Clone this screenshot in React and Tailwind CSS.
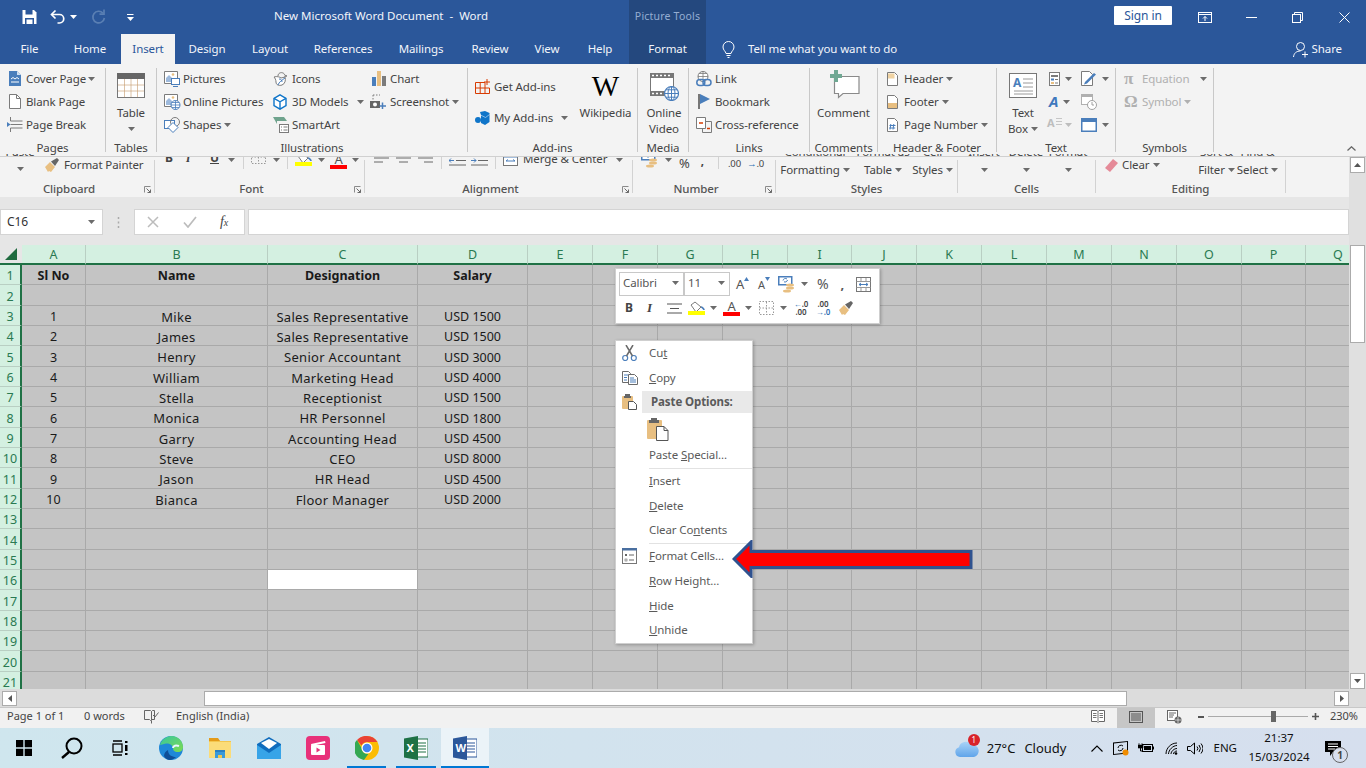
import React from "react";

const S = ({ w = 16, h = 16, children }) => (
  <svg width={w} height={h} viewBox={`0 0 ${w} ${h}`} fill="none" className="block shrink-0">{children}</svg>
);
const G = "#7b7b7b", B = "#4a7ebb", O = "#e8bf81", R = "#d83b01";

const Caret = ({ c = "#6b6b6b" }) => (
  <svg width="7" height="4" viewBox="0 0 7 4" className="block shrink-0"><path d="M0 0h7L3.5 4z" fill={c} /></svg>
);

/* ---------- Title bar icons ---------- */
const Save = () => <S w={15} h={16}><path d="M.5 1h11.5l2.5 2.5V15H.5z" fill="#fff" /><rect x="3.5" y="1" width="7" height="4.5" fill="#2b579a" /><rect x="3" y="9" width="9" height="6" fill="#2b579a" /><rect x="4.5" y="10.5" width="6" height="4.5" fill="#fff" /></S>;
const Undo = () => <S w={16} h={16}><path d="M5.5 1.5 1.5 5.5l4 4" stroke="#fff" strokeWidth="1.7" /><path d="M2 5.5h7.5a4 4 0 0 1 0 8.5H7.5" stroke="#fff" strokeWidth="1.7" /></S>;
const Redo = () => <S w={15} h={16}><path d="M12 4.2A5.8 5.8 0 1 0 13.4 9" stroke="#5a7fb3" strokeWidth="1.7" /><path d="M13 .5v4.6H8.5" stroke="#5a7fb3" strokeWidth="1.7" /></S>;
const Custom = () => <S w={7} h={7}><path d="M0 .5h6.5" stroke="#fff" /><path d="M0 3h7L3.5 7z" fill="#fff" /></S>;
const RibbonOpt = () => <S w={14} h={11}><rect x=".5" y=".5" width="13" height="10" stroke="#fff" /><path d="M.5 2.5h13" stroke="#fff" /><path d="M7 9V4.5M5 6.5l2-2 2 2" stroke="#fff" /></S>;
const Min = () => <S w={11} h={1}><path d="M0 .5h11" stroke="#fff" /></S>;
const Restore = () => <S w={11} h={11}><rect x=".5" y="2.5" width="8" height="8" stroke="#fff" /><path d="M2.5 2.5v-2h8v8h-2" stroke="#fff" /></S>;
const Close = () => <S w={11} h={11}><path d="M.5.5l10 10M10.5.5l-10 10" stroke="#fff" /></S>;
const Bulb = () => <S w={13} h={17}><path d="M4 12.5C3.6 10 1 9.3 1 6a5.5 5.5 0 0 1 11 0c0 3.3-2.600 4-3 6.500z" stroke="#fff" /><path d="M4.500 14.500h4M5.500 16.500h2" stroke="#fff" /></S>;
const Share = () => <S w={16} h={17}><circle cx="7.500" cy="5.500" r="4" stroke="#fff" /><path d="M.5 16c.5-4 3-6 7-6" stroke="#fff" /><path d="M12 10.500v6M9 13.500h6" stroke="#fff" /></S>;

/* ---------- Word ribbon icons ---------- */
const CoverPage = () => <S w={12} h={15}><path d="M0 0h8l4 4v11H0z" fill={B} /><path d="M8 0l4 4H8z" fill="#cfe0f2" /><path d="M2 8l2-1.500 2 1.500 2-1.500 2 1.500M2 11h8" stroke="#fff" /></S>;
const BlankPage = () => <S w={12} h={15}><path d="M.5.5h7l4 4v10H.5z" fill="#fff" stroke={G} /><path d="M7.500.5v4h4" stroke={G} /></S>;
const PageBreak = () => <S w={16} h={15}><path d="M3.500 0v4h12M3.500 15v-4h12M3.500 7.500h12" stroke={G} /><path d="M0 5l3.500 2.500L0 10z" fill={B} /></S>;
const TableIco = () => <S w={28} h={25}><rect x=".5" y=".5" width="27" height="24" fill="#fff" stroke="#777" /><rect x="0" y="0" width="28" height="6" fill="#666" /><path d="M1 12h26M1 18h26M7.500 6v18M14 6v18M20.500 6v18" stroke="#c49a6c" strokeOpacity=".6" /></S>;
const Pictures = () => <S w={16} h={16}><path d="M.5.5h13v9H8v3H.5z" fill="#fff" stroke={G} /><circle cx="9" cy="3.500" r="1.300" fill={O} /><path d="M2 11V7l3-3 3 3v4z" fill="#9db9dc" /><rect x="7.500" y="7.500" width="8" height="6" fill="#fff" stroke={B} /><path d="M9 15.500h5" stroke={B} /></S>;
const OnlinePic = () => <S w={17} h={16}><path d="M.5.5h13v8H8v4H.5z" fill="#fff" stroke={G} /><circle cx="9" cy="3.500" r="1.300" fill={O} /><path d="M2 11V7l3-3 3 3v4z" fill="#9db9dc" /><circle cx="11.500" cy="11" r="4.500" fill="#fff" stroke={B} /><path d="M7 11h9M11.500 6.500v9M8 8.500h7M8 13.500h7" stroke={B} strokeWidth=".8" /></S>;
const Shapes = () => <S w={17} h={16}><rect x=".5" y="3.500" width="10" height="8" fill="#fff" stroke={B} /><circle cx="11" cy="5" r="4.500" stroke={G} fill="none" /><path d="M9 5.500l5 5-5 5-5-5z" fill="#fff" stroke={B} /></S>;
const IconsIco = () => <S w={16} h={16}><path d="M5 5c0-3 3-4 5-3 1 .5 1.500 1 1.500 2L14 5l-2.500.5" stroke={G} /><path d="M1 6c3-1 6 0 7 1l4-1c1 3 0 7-3 8-3 1-6 0-6-3 0-2-1-4-2-5z" fill="#fff" stroke={G} /><path d="M5 14c1-3 4-5 7-7" stroke={B} /><path d="M6 8c2 0 3 1 3 3" stroke={B} /></S>;
const Models = () => <S w={14} h={16}><path d="M7 .8l6 3.500v7.400l-6 3.500-6-3.500V4.300z" stroke="#0f75c9" strokeWidth="1.400" fill="#fff" /><path d="M1 4.300l6 3.500 6-3.500M7 7.800v7.400" stroke="#0f75c9" strokeWidth="1.400" /></S>;
const SmartArt = () => <S w={16} h={16}><path d="M0 0h11l3 4H4v3z" fill="#6fa38d" /><rect x="6.500" y="7.500" width="9" height="8" fill="#fff" stroke={G} /><path d="M8 10h1M10.500 10h4M8 13h1M10.500 13h4" stroke={G} /></S>;
const Chart = () => <S w={14} h={15}><rect x="0" y="6" width="4" height="9" fill={B} /><rect x="5" y="0" width="4" height="15" fill={O} /><rect x="10" y="5" width="4" height="10" fill={G} /></S>;
const Shot = () => <S w={16} h={15}><path d="M3 1v8M3 1h7" stroke={G} strokeDasharray="1.500 1.500" /><rect x="0" y="7" width="10" height="7" fill="#666" /><circle cx="5" cy="10.500" r="2" fill="#fff" /><path d="M12.500 8.500v6.500M9.500 12h6.500" stroke={B} strokeWidth="1.500" /></S>;
const GetAdd = () => <S w={15} h={15}><path d="M.5 3.500h9.500v11H.5zM.5 9h14v5.500H5.200V3.500" stroke={R} /><path d="M12 0v6M9 3h6" stroke={R} /></S>;
const MyAdd = () => <S w={15} h={14}><path d="M5 1l5-1 4.500 2v9L10 14l-4-2V4z" fill="#0f75c9" /><circle cx="3" cy="9" r="3" fill="#0f75c9" /><path d="M5.500 4l5 2.500 4-3" stroke="#fff" strokeWidth=".5" /></S>;
const Film = () => <S w={29} h={28}><rect x=".5" y=".5" width="23" height="22" fill="#fff" stroke="#777" /><rect x="0" y="0" width="24" height="5" fill="#777" /><rect x="0" y="18" width="24" height="5" fill="#777" /><path d="M2 2.500h20M2 20.500h20" stroke="#fff" strokeWidth="1.600" strokeDasharray="2 2" /><circle cx="21.500" cy="20.500" r="7" fill="#fff" stroke={B} strokeWidth="1.200" /><path d="M14.500 20.500h14M21.500 13.500v14M16 16.800h11M16 24.200h11" stroke={B} /><ellipse cx="21.500" cy="20.500" rx="3.500" ry="7" stroke={B} /></S>;
const LinkIco = () => <S w={16} h={16}><circle cx="7" cy="5.500" r="5" fill="#fff" stroke={G} /><path d="M2 5.500h10M7 .5v8M3 2.500h8" stroke={G} strokeWidth=".8" /><rect x=".8" y="8.500" width="8" height="6" rx="3" stroke={B} strokeWidth="1.500" fill="none" /><rect x="7" y="8.500" width="8" height="6" rx="3" stroke={B} strokeWidth="1.500" fill="none" /></S>;
const Bookmark = () => <S w={12} h={15}><rect x="0" y="0" width="2" height="15" fill="#777" /><path d="M2 0l10 5-10 5z" fill={B} /></S>;
const CrossRef = () => <S w={16} h={16}><path d="M.5.5h9v11h-9z" fill="#fff" stroke={G} /><path d="M9.500 4.500h6v11h-9v-4" stroke={G} /><path d="M3 6h4" stroke={R} strokeWidth="1.500" /><path d="M11 11.500h3" stroke={R} strokeWidth="1.500" /></S>;
const CommentIco = () => <S w={31} h={29}><path d="M5.500 6.500h24.500v17H14l-4.500 4v-4h-4z" fill="#fff" stroke="#8a8a8a" strokeWidth="1.200" /><path d="M7 0v12M1 6h12" stroke="#70a893" strokeWidth="4" /></S>;
const Header = () => <S w={11} h={14}><path d="M.5.500h7l3 3v10H.5z" fill="#fff" stroke={G} /><rect x="1" y="1.500" width="6.500" height="5" fill="#f0d3a3" /></S>;
const Footer = () => <S w={11} h={14}><path d="M.5.500h7l3 3v10H.5z" fill="#fff" stroke={G} /><rect x="1" y="8" width="9" height="5" fill={O} /></S>;
const PageNum = () => <S w={11} h={14}><path d="M.5.500h7l3 3v10H.5z" fill="#fff" stroke={G} /><path d="M3.800 6l-.8 5.500M6.800 6L6 11.500M2.500 7.500h6M2.200 10h6" stroke={B} /></S>;
const TextBoxIco = () => (
  <S w={28} h={25}><rect x=".5" y=".5" width="27" height="24" fill="#fff" stroke="#777" /><path d="M14 6h10M14 10h10M14 14h10M5 18h19M5 21h19" stroke="#9a9a9a" /><text x="4" y="14" fontSize="12" fontWeight="700" fontFamily="Noto Sans, sans-serif" fill={B}>A</text></S>
);
const Quick = () => <S w={11} h={14}><rect x=".5" y=".5" width="10" height="13" fill="#fff" stroke={G} /><rect x="2" y="3" width="7" height="2" fill={G} /><rect x="2" y="6.500" width="3" height="2" fill={B} /><rect x="2" y="10" width="3" height="2" fill={O} /><path d="M6 7.500h3M6 11h3" stroke={G} /></S>;
const SigLine = () => <S w={16} h={15}><path d="M.5.500h8l3 3v11H.5z" fill="#fff" stroke={G} /><path d="M4 11l9-9 2 1.500-9 9-3 1z" fill={B} /></S>;
const WordArt = () => <span className="font-['Noto_Sans',sans-serif] text-[15px] leading-none font-bold italic text-[#3f78bd]">A</span>;
const DateIco = () => <S w={16} h={16}><rect x=".5" y=".5" width="11" height="10" fill="#fff" stroke="#b0b0b0" /><rect x="0" y="0" width="12" height="3" fill="#b0b0b0" /><circle cx="11" cy="11" r="4.500" fill="#fff" stroke="#a0a0a0" /><path d="M11 8v3h2" stroke="#a0a0a0" /></S>;
const DropCap = () => <div className="flex items-start"><span className="font-['Noto_Sans',sans-serif] text-[11px] leading-[11px] font-bold text-[#bdbdbd]">A</span><S w={7} h={15}><path d="M1 1.500h6M1 4.500h6M1 7.500h6" stroke="#c6c6c6" /></S></div>;
const ObjIco = () => <S w={16} h={14}><rect x=".75" y=".75" width="14.500" height="12.500" fill="#fff" stroke={B} strokeWidth="1.500" /><rect x="1" y="1" width="14" height="3" fill={B} /></S>;

/* ---------- Excel ribbon / toolbar icons ---------- */
const Brush = () => <S w={16} h={14}><path d="M0 9l5-5 5 5-4 5-2-1-1 1z" fill={O} /><path d="M6 3.500l6-3.500 2 2-4 6z" fill="#666" /></S>;
const Fill = () => <S w={17} h={14}><path d="M3 4l4-3 6 5-5 5z" fill="#fff" stroke={G} /><path d="M13 6c1 0 3 2 3 3" stroke={B} strokeWidth="1.600" /><rect x="0" y="10" width="17" height="4" fill="#ffff00" /></S>;
const ACol = () => <div className="flex flex-col items-center w-[17px]"><span className="font-['Noto_Sans',sans-serif] text-[13px] leading-[11px] text-[#555]">A</span><div className="w-[17px] h-[4px] bg-[#ff0000]" /></div>;
const Borders = () => <S w={15} h={14}><rect x=".5" y=".5" width="14" height="13" stroke="#999" strokeDasharray="1.500 1.500" /><path d="M.5 7h14M7.500 1v12" stroke="#999" strokeDasharray="1.500 1.500" /></S>;
const AlignC = () => <S w={15} h={11}><path d="M0 1h15M3 5.500h9M0 10h15" stroke="#555" /></S>;
const Coins = () => <S w={18} h={17}><rect x=".75" y=".75" width="13" height="8" fill="#fff" stroke={B} strokeWidth="1.500" /><path d="M5 4.500a2.500 2.500 0 0 1 4-1.500M9.500 4a2.500 2.500 0 0 1-3.500 1.800" stroke={B} /><ellipse cx="12" cy="9" rx="4" ry="1.500" fill={O} /><ellipse cx="12" cy="12" rx="4" ry="1.500" fill={O} /><ellipse cx="9" cy="15" rx="4" ry="1.500" fill={O} /></S>;
const Wrap = () => <S w={15} h={15}><rect x=".5" y=".5" width="14" height="14" stroke="#777" fill="#fff" /><path d="M.5 4.500h14M.5 10.500h14M5 1v3M10 1v3M5 11v3M10 11v3" stroke="#999" /><path d="M3 7.500h9M3 7.500l2-1.500M3 7.500l2 1.500M12 7.500l-2-1.500M12 7.500l-2 1.500" stroke={B} /></S>;
const Dec = ({ inc }) => (
  <div className="w-[16px] flex flex-col items-center font-['Noto_Sans',sans-serif] text-[8px] leading-[8px] font-semibold text-[#444]">
    {inc ? <><span>.00</span><span className="text-[#2f6fb4]">→.0</span></> : <><span><span className="text-[#2f6fb4]">←</span>.0</span><span>.00</span></>}
  </div>
);
const Eraser = () => <S w={13} h={13}><path d="M8 0l5 4-8 9-5-4z" fill="#e58a98" /></S>;
const Launcher = () => <S w={7} h={7}><path d="M.5 6.500v-6h6" stroke="#8a8a8a" /><path d="M2.500 2.500l4 4M6.500 3.500v3h-3" stroke="#6a6a6a" /></S>;
const MergeIco = () => <S w={15} h={13}><rect x=".5" y=".5" width="14" height="12" fill="#fff" stroke="#777" /><path d="M.5 4h14M3 8h9M3 8l2-1.500M12 8l-2-1.500" stroke={B} /></S>;
const IndentIco = ({ r }) => <S w={17} h={11}><path d="M0 1h17M7 5.500h10M0 10h17" stroke="#666" /><path d={r ? "M0 5.500h5M3 3.500l2 2-2 2" : "M5 5.500H0M2 3.500l-2 2 2 2"} stroke={B} /></S>;

/* Menu icons */
const Scissors = () => <S w={15} h={16}><circle cx="3.200" cy="13" r="2.500" stroke={B} strokeWidth="1.200" /><circle cx="11.800" cy="13" r="2.500" stroke={B} strokeWidth="1.200" /><path d="M4.500 11L11 0M10.500 11L4 0" stroke="#6a6a6a" strokeWidth="1.500" /></S>;
const CopyIco = () => <S w={16} h={14}><path d="M.5.500h6l2 2v9h-8z" fill="#fff" stroke="#6a6a6a" /><path d="M6.500 3.500h6l3 3v7h-9z" fill="#fff" stroke="#6a6a6a" /><path d="M2 4h4M2 6.500h3M2 9h3M8 7h4M8 9h6M8 11h6" stroke={B} /></S>;
const PasteIco = ({ big }) => big ? (
  <S w={22} h={24}><rect x="0" y="3" width="15" height="19" rx="1" fill={O} /><path d="M4 3V1h6v2h2v3H2V3z" fill="#666" /><path d="M9.500 9.500H17l4 4v10H9.500z" fill="#fff" stroke="#555" /><path d="M17 9.500v4h4" stroke="#555" /></S>
) : (
  <S w={15} h={16}><rect x="0" y="2" width="11" height="13" rx="1" fill={O} /><path d="M3 2V0h5v2h1v2H2V2z" fill="#666" /><path d="M6.500 7.500h5l3 3v5h-8z" fill="#fff" stroke="#555" /></S>
);
const FormatCellsIco = () => <S w={15} h={16}><rect x=".5" y=".5" width="14" height="15" fill="#fff" stroke="#777" /><rect x="0" y="0" width="15" height="2.500" fill="#4a6fa0" /><rect x="3" y="6" width="2" height="2" fill="#666" /><rect x="3" y="11" width="2" height="2" stroke="#666" strokeWidth=".6" /><path d="M7 7h5M7 12h5" stroke="#666" /></S>;

/* Status bar */
const Proof = () => <S w={15} h={15}><path d="M.5 1.500h6l1 1 1-1h2v9h-3l-1 1-1-1h-5zM7.500 2.500v9" stroke="#666" /><path d="M9 6l2 2 3.500-4.500" stroke="#666" /><path d="M7.500 11.500v3" stroke="#666" /></S>;
const ReadIco = () => <S w={14} h={13}><path d="M.5.500h5.500l1 1 1-1h5.500v11H8l-1 1-1-1H.5z" fill="#fff" stroke="#666" /><path d="M7 1.500v10M2 3.500h3.500M2 5.500h3.500M2 7.500h3.500M8.500 3.500H12M8.500 5.500H12M8.500 7.500H12" stroke="#777" /></S>;
const PrintIco = () => <S w={14} h={12}><rect x=".5" y=".5" width="13" height="11" fill="none" stroke="#555" /><path d="M2 3h10M2 5h10M2 7h10M2 9h10" stroke="#555" /></S>;
const WebIco = () => <S w={15} h={14}><rect x=".5" y=".5" width="10" height="10" fill="#fff" stroke="#666" /><path d="M2 3h7M2 5h5M2 7h4" stroke="#666" /><circle cx="11" cy="10" r="3.500" fill="#666" /><path d="M8 10h6M11 7v6" stroke="#fff" strokeWidth=".6" /></S>;

/* Taskbar */
const WinLogo = () => <S w={16} h={16}><path d="M0 0h7.300v7.300H0zM8.700 0H16v7.300H8.700zM0 8.700h7.300V16H0zM8.700 8.700H16V16H8.700z" fill="#000" /></S>;
const Search = () => <S w={22} h={22}><circle cx="13" cy="9" r="7.500" stroke="#000" strokeWidth="2" /><path d="M8 15l-7 6" stroke="#000" strokeWidth="2.400" /></S>;
const TaskView = () => <S w={16} h={16}><path d="M1 1h9M1 15h9" stroke="#000" strokeWidth="1.400" /><rect x="1" y="4" width="9" height="8" stroke="#000" strokeWidth="1.300" /><rect x="13" y="1" width="2.500" height="2" fill="#000" /><rect x="13" y="5" width="2.500" height="6" fill="#000" /><rect x="13" y="13" width="2.500" height="2" fill="#000" /></S>;
const Edge = () => (
  <S w={24} h={24}><defs><linearGradient id="ed1" x1="0" y1="0" x2="1" y2="1"><stop offset="0" stopColor="#38c6a0" /><stop offset="1" stopColor="#7ddc4f" /></linearGradient></defs>
    <circle cx="12" cy="12" r="12" fill="#1f88d8" /><path d="M1 9C3 2 9 0 13 0c6 0 11 5 11 11 0 3-2 5-5 5-4 0-5-2-5-4 0-3-4-5-7-4.500C4 8 2 9 1 9z" fill="url(#ed1)" /><path d="M9 14c0 5 4 7 8 7-2 2-4 3-6 3-3 0-5-2-6-4 0-3 2-5 4-6z" fill="#0f4f98" /><path d="M14 12c0-2.500 3-3 6-2" stroke="#eaf6ff" strokeWidth="2" /></S>
);
const Folder = () => <S w={22} h={20}><path d="M0 1h9l2 2h11v17H0z" fill="#f3c64e" /><path d="M0 0h9l2 3H0z" fill="#e49b19" /><path d="M0 4h22v16H0z" fill="#fbdc79" /><path d="M6 14h10v6H6z" fill="#3b9ad9" /><path d="M9 17h4v3H9z" fill="#f3c64e" /><path d="M6 12h10v2H6z" fill="#2a7fc0" /></S>;
const Mail = () => <S w={24} h={22}><path d="M12 0L0 7v15h24V7z" fill="#0f6cbd" /><path d="M0 8l12 8 12-8v14H0z" fill="#37a4e8" /><path d="M4 6l8-4 8 4-8 6z" fill="#fff" /></S>;
const Clip = () => <S w={24} h={24}><rect width="24" height="24" rx="4" fill="#e8317a" /><rect x="5" y="9" width="14" height="10" rx="1" fill="#fff" /><path d="M5 8l14-3 .5 2-14 3z" fill="#fff" /><path d="M10.500 11.500v5l4-2.500z" fill="#e8317a" /></S>;
const Chrome = () => <S w={24} h={24}><circle cx="12" cy="12" r="12" fill="#fbbc04" /><path d="M12 0a12 12 0 0 1 10.400 6H12a6 6 0 0 0-5.500 3.500L2 4A12 12 0 0 1 12 0z" fill="#ea4335" /><path d="M2 4l4.500 8a6 6 0 0 0 7 5.800L9 24A12 12 0 0 1 2 4z" fill="#34a853" /><circle cx="12" cy="12" r="5.500" fill="#fff" /><circle cx="12" cy="12" r="4.300" fill="#4285f4" /></S>;
const AppTile = ({ c, l, line }) => (
  <S w={24} h={24}><rect x="8" y="3" width="16" height="18" fill="#fff" stroke={c} /><path d="M14 7h8M14 10h8M14 13h8M14 16h8" stroke={line} strokeWidth="1.200" /><path d="M0 2.500l14-2.500v24L0 21.500z" fill={c} /><text x="2.500" y="16" fontSize="11" fontWeight="700" fontFamily="Noto Sans, sans-serif" fill="#fff">{l}</text></S>
);
const Cloud = () => <S w={24} h={17}><defs><linearGradient id="cl" x1="0" y1="0" x2="0" y2="1"><stop offset="0" stopColor="#a9d3f7" /><stop offset="1" stopColor="#5fa4ea" /></linearGradient></defs><path d="M5 17a5 5 0 0 1-1-9.800A6.500 6.500 0 0 1 16 5a5.500 5.500 0 0 1 3 12z" fill="url(#cl)" /></S>;
const Chevron = () => <S w={12} h={7}><path d="M.5 6.500L6 1l5.500 5.500" stroke="#000" strokeWidth="1.100" /></S>;
const Meet = () => <S w={17} h={16}><rect x=".5" y="1.500" width="14" height="11.500" stroke="#000" transform="skewY(-6) translate(0 1.500)" /><path d="M5 8a3 3 0 0 1 5-2M10 8a3 3 0 0 1-5 2" stroke="#000" /><circle cx="12.500" cy="12.500" r="3" fill="#f08c00" /></S>;
const Battery = () => <S w={16} h={12}><path d="M1 1v2M4 1v2M0 3h5v3H0z" fill="#000" stroke="#000" strokeWidth=".6" /><path d="M2.500 6v3h2" stroke="#000" /><rect x="4.500" y="2.500" width="10" height="7" stroke="#000" /><rect x="6" y="4" width="7" height="4" fill="#000" /><rect x="15" y="4.500" width="1" height="3" fill="#000" /></S>;
const Wifi = () => <S w={13} h={13}><path d="M1 12C1 6 6 1 12 1M3.500 12C3.500 8 8 3.500 12 3.500M6 12c0-2.500 3-5.500 6-5.500" stroke="#000" strokeWidth="1" /><path d="M8.500 12c0-1.500 1.500-3 3.500-3" stroke="#000" strokeWidth="1" /><circle cx="11" cy="11.500" r="1.300" fill="#000" /></S>;
const Speaker = () => <S w={16} h={13}><path d="M.5 4.500h3L7.500 1v11l-4-3.500h-3z" stroke="#000" /><path d="M10 4.500a3 3 0 0 1 0 4M12 3a5.500 5.500 0 0 1 0 7M14 1.500a8 8 0 0 1 0 10" stroke="#000" /></S>;
const Notify = () => <S w={16} h={15}><path d="M0 0h16v11H8l-3 4v-4H0z" fill="#000" /><path d="M3 3h10M3 5.500h10M3 8h7" stroke="#fff" /></S>;

/* ---------- Layout helpers ---------- */
const Sep = () => <div className="w-px h-[84px] mt-1 shrink-0 bg-[#c8c8c8]" />;
const Group = ({ w, label, children, inner = "" }) => (
  <div className={`${w} shrink-0 flex flex-col`}>
    <div className={`h-[76px] pt-[3px] ${inner}`}>{children}</div>
    <div className="h-[15px] leading-[15px] text-center whitespace-nowrap">{label}</div>
  </div>
);
const Item = ({ icon, boxW = "w-[18px]", label, caret, gapC = "ml-[3px]", c = "" }) => (
  <div className={`flex items-center h-[23px] whitespace-nowrap ${c}`}>
    <div className={`${boxW} shrink-0 flex items-center`}>{icon}</div>
    <span>{label}</span>
    {caret && <div className={gapC}><Caret /></div>}
  </div>
);

const XSep = () => <div className="w-px h-[33px] mt-[6px] shrink-0 bg-[#d2d2d2]" />;
const XGroup = ({ w, label, launcher, children }) => (
  <div className={`${w} shrink-0 flex flex-col`}>
    <div className="h-[28px] overflow-hidden relative">{children}</div>
    <div className="h-[14px] flex items-center whitespace-nowrap">
      <span className={`flex-1 text-center font-medium text-[#555] ${launcher ? "pr-[6px]" : ""}`}>{label}</span>
      {launcher && <div className="mr-[3px]"><Launcher /></div>}
    </div>
  </div>
);
const StackCol = ({ w, top, bottom, caret }) => (
  <div className={`${w} shrink-0 flex flex-col items-center -mt-[9px] whitespace-nowrap`}>
    <div className="h-[14px] leading-[14px]">{top}</div>
    <div className="h-[14px] leading-[14px] mt-[4px] flex items-center gap-[3px]">{bottom}{caret && <Caret />}</div>
  </div>
);

const columns = ["A", "B", "C", "D", "E", "F", "G", "H", "I", "J", "K", "L", "M", "N", "O", "P", "Q"];
const data = [
  ["Sl No", "Name", "Designation", "Salary"],
  [],
  ["1", "Mike", "Sales Representative", "USD 1500"],
  ["2", "James", "Sales Representative", "USD 1500"],
  ["3", "Henry", "Senior Accountant", "USD 3000"],
  ["4", "William", "Marketing Head", "USD 4000"],
  ["5", "Stella", "Receptionist", "USD 1500"],
  ["6", "Monica", "HR Personnel", "USD 1800"],
  ["7", "Garry", "Accounting Head", "USD 4500"],
  ["8", "Steve", "CEO", "USD 8000"],
  ["9", "Jason", "HR Head", "USD 4500"],
  ["10", "Bianca", "Floor Manager", "USD 2000"],
];
const tabs = [
  ["File", "w-[59px]"], ["Home", "w-[62px]"], ["Insert", "w-[54px] bg-[#f3f3f3] text-[#2b579a]"], ["Design", "w-[64px]"],
  ["Layout", "w-[62px]"], ["References", "w-[84px]"], ["Mailings", "w-[72px]"], ["Review", "w-[66px]"], ["View", "w-[48px]"], ["Help", "w-[58px]"],
];

function MenuItem({ icon, h = "h-[24px]", children }) {
  return (
    <div className={`${h} flex items-center`}>
      <div className="w-[33px] pl-[6px] shrink-0">{icon}</div>
      <span className="whitespace-nowrap text-[#5a5a5a]">{children}</span>
    </div>
  );
}

export default function App() {
  return (
    <div className="relative w-[1366px] h-[768px] overflow-hidden flex flex-col bg-[#f3f3f3] text-[#444] text-[11.5px] tracking-[-0.1px] font-['Noto_Sans',sans-serif]">
      {/* Title row */}
      <div className="h-[34px] shrink-0 bg-[#2b579a] flex text-white">
        <div className="w-[274px] flex items-center pl-[22px]">
          <Save />
          <div className="ml-[13px]"><Undo /></div>
          <div className="ml-[4px]"><Caret c="#fff" /></div>
          <div className="ml-[14px]"><Redo /></div>
          <div className="ml-[21px]"><Custom /></div>
        </div>
        <div className="w-[355px] flex items-center pb-[2px] text-[11.5px] tracking-normal text-[#f2f5fa] whitespace-pre">New Microsoft Word Document  -  Word</div>
        <div className="w-[77px] bg-[#24487e] flex items-center justify-center text-[#95aed2] text-[10.5px] tracking-[0.2px] whitespace-nowrap">Picture Tools</div>
        <div className="w-[408px] shrink-0" />
        <div className="w-[58px] h-[19px] mt-[6px] bg-white text-[#2b579a] text-[12px] rounded-[1px] flex items-center justify-center">Sign in</div>
        <div className="ml-[26px] flex items-center"><RibbonOpt /></div>
        <div className="ml-[34px] flex items-center"><Min /></div>
        <div className="ml-[35px] flex items-center"><Restore /></div>
        <div className="ml-[36px] flex items-center"><Close /></div>
      </div>
      {/* Tabs row */}
      <div className="h-[30px] shrink-0 bg-[#2b579a] flex text-[#f2f5fa] text-[11.5px]">
        {tabs.map(([t, c]) => (
          <div key={t} className={`${c} flex items-center justify-center shrink-0`}>{t}</div>
        ))}
        <div className="w-[77px] shrink-0 bg-[#24487e] flex items-center justify-center">Format</div>
        <div className="ml-[16px] flex items-center"><Bulb /></div>
        <div className="ml-[13px] flex items-center whitespace-nowrap">Tell me what you want to do</div>
        <div className="flex-1" />
        <div className="flex items-center gap-[3px] pr-[24px]"><Share /><span>Share</span></div>
      </div>

      {/* Word ribbon */}
      <div className="h-[93px] shrink-0 flex border-b border-[#d0d0d0]">
        <Group w="w-[105px]" label="Pages" inner="pl-[9px]">
          <Item icon={<CoverPage />} boxW="w-[17px]" label="Cover Page" caret gapC="ml-[2px]" />
          <Item icon={<BlankPage />} boxW="w-[17px]" label="Blank Page" />
          <div className="-ml-[2px]"><Item icon={<PageBreak />} boxW="w-[19px]" label="Page Break" /></div>
        </Group>
        <Sep />
        <Group w="w-[50px]" label="Tables">
          <div className="flex flex-col items-center pt-[6px]">
            <TableIco />
            <span className="mt-[7px] leading-[16px]">Table</span>
            <div className="mt-[6px]"><Caret /></div>
          </div>
        </Group>
        <Sep />
        <Group w="w-[310px]" label="Illustrations" inner="flex pl-[7px]">
          <div className="w-[109px] shrink-0">
            <Item icon={<Pictures />} boxW="w-[19px]" label="Pictures" />
            <Item icon={<OnlinePic />} boxW="w-[19px]" label="Online Pictures" />
            <Item icon={<Shapes />} boxW="w-[19px]" label="Shapes" caret />
          </div>
          <div className="w-[99px] shrink-0">
            <Item icon={<IconsIco />} boxW="w-[19px]" label="Icons" />
            <Item icon={<Models />} boxW="w-[19px]" label="3D Models" caret gapC="ml-[8px]" />
            <Item icon={<SmartArt />} boxW="w-[19px]" label="SmartArt" />
          </div>
          <div className="flex-1">
            <Item icon={<Chart />} boxW="w-[18px]" label="Chart" />
            <div className="-ml-[2px]"><Item icon={<Shot />} boxW="w-[20px]" label="Screenshot" caret /></div>
          </div>
        </Group>
        <Sep />
        <Group w="w-[169px]" label="Add-ins" inner="flex pl-[7px]">
          <div className="w-[99px] shrink-0 pt-[8px]">
            <Item icon={<GetAdd />} boxW="w-[19px]" label="Get Add-ins" />
            <div className="mt-[8px]"><Item icon={<MyAdd />} boxW="w-[19px]" label="My Add-ins" caret gapC="ml-[8px]" /></div>
          </div>
          <div className="flex-1 flex flex-col items-center pt-[4px]">
            <span className="font-['Liberation_Serif',serif] text-[29px] leading-[30px] text-black">W</span>
            <span className="mt-[4px] leading-[16px]">Wikipedia</span>
          </div>
        </Group>
        <Sep />
        <Group w="w-[50px]" label="Media">
          <div className="flex flex-col items-center pt-[6px] pl-[2px]">
            <Film />
            <span className="mt-[4px] leading-[16px] text-center">Online<br />Video</span>
          </div>
        </Group>
        <Sep />
        <Group w="w-[120px]" label="Links" inner="pl-[7px]">
          <Item icon={<LinkIco />} boxW="w-[19px]" label="Link" />
          <div className="pl-[2px]"><Item icon={<Bookmark />} boxW="w-[17px]" label="Bookmark" /></div>
          <Item icon={<CrossRef />} boxW="w-[19px]" label="Cross-reference" />
        </Group>
        <Sep />
        <Group w="w-[67px]" label="Comments">
          <div className="flex flex-col items-center">
            <div className="pt-[3px] pl-[1px]"><CommentIco /></div>
            <span className="mt-[6px] leading-[16px]">Comment</span>
          </div>
        </Group>
        <Sep />
        <Group w="w-[118px]" label="Header & Footer" inner="pl-[9px]">
          <Item icon={<Header />} boxW="w-[17px]" label="Header" caret />
          <Item icon={<Footer />} boxW="w-[17px]" label="Footer" caret />
          <Item icon={<PageNum />} boxW="w-[17px]" label="Page Number" caret />
        </Group>
        <Sep />
        <Group w="w-[118px]" label="Text" inner="flex">
          <div className="w-[52px] shrink-0 flex flex-col items-center pt-[6px]">
            <TextBoxIco />
            <span className="mt-[7px] leading-[16px]">Text</span>
            <div className="flex items-center gap-[3px] leading-[16px]"><span>Box</span><Caret /></div>
          </div>
          <div className="w-[32px] shrink-0">
            <div className="h-[23px] flex items-center gap-[5px]"><Quick /><Caret /></div>
            <div className="h-[23px] flex items-center gap-[5px]"><WordArt /><Caret /></div>
            <div className="h-[23px] flex items-center gap-[3px] -ml-[2px]"><DropCap /><Caret c="#bdbdbd" /></div>
          </div>
          <div>
            <div className="h-[23px] flex items-center gap-[5px]"><SigLine /><Caret /></div>
            <div className="h-[23px] flex items-center"><DateIco /></div>
            <div className="h-[23px] flex items-center gap-[5px]"><ObjIco /><Caret /></div>
          </div>
        </Group>
        <Sep />
        <Group w="w-[97px]" label="Symbols" inner="pl-[8px] text-[#b0b0b0]">
          <div className="flex items-center h-[23px] whitespace-nowrap">
            <span className="w-[18px] font-['Liberation_Serif',serif] text-[17px] font-bold">π</span>
            <span>Equation</span>
            <div className="ml-[11px]"><Caret /></div>
          </div>
          <div className="flex items-center h-[23px] whitespace-nowrap">
            <span className="w-[18px] font-['Liberation_Serif',serif] text-[17px] font-bold">Ω</span>
            <span>Symbol</span>
            <div className="ml-[3px]"><Caret c="#b0b0b0" /></div>
          </div>
        </Group>
        <Sep />
        <div className="flex-1 flex items-end justify-end pr-[10px] pb-[5px]">
          <S w={9} h={5}><path d="M.5 4.500L4.500.8l4 3.700" stroke="#666" strokeWidth="1.300" /></S>
        </div>
      </div>

      {/* Everything below the Word ribbon */}
      <div className="h-[532px] shrink-0 flex">
        <div className="w-[1349px] shrink-0 -mt-[3px] relative z-10 flex flex-col overflow-hidden">
          {/* Excel ribbon behind */}
          <div className="h-[43px] shrink-0 flex">
            <XGroup w="w-[154px]" label="Clipboard" launcher>
              <div className="flex">
                <div className="w-[40px] flex flex-col items-center -mt-[9px]">
                  <span className="h-[14px] leading-[14px]">Paste</span>
                  <div className="mt-[8px]"><Caret /></div>
                </div>
                <div className="flex items-center h-[14px] mt-[4px] ml-[5px] gap-[3px] whitespace-nowrap"><Brush /><span>Format Painter</span></div>
              </div>
            </XGroup>
            <XSep />
            <XGroup w="w-[209px]" label="Font" launcher>
              <div className="mt-[3px] h-[25px] overflow-hidden flex items-start pl-[10px] text-[#444]">
                <div className="flex items-center h-[14px] -mt-[6px] font-bold text-[12px]">
                  <span className="w-[21px]">B</span><span className="w-[24px] italic font-serif">I</span><span className="w-[15px] underline">U</span>
                </div>
                <div className="mt-[1px] ml-[3px]"><Caret /></div>
                <div className="w-px h-[12px] bg-[#d2d2d2] ml-[8px]" />
                <div className="ml-[7px] -mt-[7px]"><Borders /></div>
                <div className="mt-[1px] ml-[7px]"><Caret /></div>
                <div className="w-px h-[12px] bg-[#d2d2d2] ml-[7px]" />
                <div className="ml-[7px] -mt-[5px]"><Fill /></div>
                <div className="mt-[1px] ml-[6px]"><Caret /></div>
                <div className="ml-[5px] -mt-[3px]"><ACol /></div>
                <div className="mt-[1px] ml-[5px]"><Caret /></div>
              </div>
            </XGroup>
            <XSep />
            <XGroup w="w-[267px]" label="Alignment" launcher>
              <div className="mt-[3px] h-[25px] overflow-hidden flex items-start pl-[9px]">
                <div className="flex gap-[7px]"><S w={15} h={6}><path d="M0 1h15M0 5h9" stroke="#666" /></S><S w={15} h={6}><path d="M0 1h15M3 5h9" stroke="#666" /></S><S w={15} h={6}><path d="M0 1h15M6 5h9" stroke="#666" /></S></div>
                <div className="w-px h-[12px] bg-[#d2d2d2] ml-[8px]" />
                <div className="ml-[7px] flex gap-[5px] -mt-[2px]"><IndentIco /><IndentIco r /></div>
                <div className="w-px h-[12px] bg-[#d2d2d2] ml-[7px]" />
                <div className="ml-[7px] -mt-[4px]"><MergeIco /></div>
                <span className="ml-[5px] h-[14px] -mt-[5px] leading-[14px] whitespace-nowrap">Merge &amp; Center</span>
                <div className="ml-[9px] mt-[1px]"><Caret /></div>
              </div>
            </XGroup>
            <XSep />
            <XGroup w="w-[142px]" label="Number" launcher>
              <div className="mt-[3px] h-[25px] overflow-hidden flex items-start pl-[8px]">
                <div className="-mt-[6px]"><Coins /></div>
                <div className="ml-[6px] mt-[1px]"><Caret /></div>
                <span className="ml-[7px] -mt-[1px] text-[13px] leading-[14px]">%</span>
                <span className="ml-[11px] -mt-[3px] font-bold leading-[14px]">,</span>
                <div className="w-px h-[12px] bg-[#d2d2d2] ml-[14px]" />
                <div className="ml-[9px] flex gap-[6px] text-[9.5px] leading-[12px] pt-[1px] whitespace-nowrap"><span>.00</span><span><span className="text-[#2f6fb4]">→</span>.0</span></div>
              </div>
            </XGroup>
            <XSep />
            <XGroup w="w-[181px]" label="Styles">
              <div className="flex pl-[1px] pt-0">
                <StackCol w="w-[76px]" top="Conditional" bottom="Formatting" caret />
                <StackCol w="w-[60px]" top="Format as" bottom="Table" caret />
                <StackCol w="w-[39px]" top="Cell" bottom="Styles" caret />
              </div>
            </XGroup>
            <XSep />
            <XGroup w="w-[137px]" label="Cells">
              <div className="flex pl-[5px]">
                {["Insert", "Delete", "Format"].map((t) => (
                  <div key={t} className="w-[42px] flex flex-col items-center -mt-[9px]">
                    <span className="h-[14px] leading-[14px]">{t}</span>
                    <div className="mt-[9px]"><Caret /></div>
                  </div>
                ))}
              </div>
            </XGroup>
            <XSep />
            <XGroup w="w-[189px]" label="Editing">
              <div className="flex">
                <div className="flex items-center h-[14px] mt-[4px] pl-[9px] gap-[4px] w-[100px] whitespace-nowrap"><Eraser /><span>Clear</span><Caret /></div>
                <StackCol w="w-[41px]" top="Sort &" bottom="Filter" caret />
                <StackCol w="w-[41px]" top="Find &" bottom="Select" caret />
              </div>
            </XGroup>
            <XSep />
          </div>
          {/* Formula bar */}
          <div className="h-[48px] shrink-0 bg-[#e6e6e6] flex items-start pt-[12px]">
            <div className="w-[103px] h-[26px] bg-white border border-[#d4d4d4] flex items-center justify-between pl-[6px] pr-[7px] text-[12px] text-[#333]">
              <span>C16</span><Caret />
            </div>
            <div className="w-[31px] h-[26px] flex items-center justify-center">
              <S w={3} h={11}><path d="M1.500 0v2M1.500 4.500v2M1.500 9v2" stroke="#aaa" strokeWidth="1.500" /></S>
            </div>
            <div className="w-[111px] h-[26px] bg-white border border-[#d4d4d4] flex items-center pl-[12px]">
              <S w={12} h={12}><path d="M1 1l10 10M11 1L1 11" stroke="#bcbcbc" strokeWidth="1.500" /></S>
              <div className="ml-[24px]"><S w={14} h={12}><path d="M1 6.500l4 4.500 8-10" stroke="#bcbcbc" strokeWidth="1.700" /></S></div>
              <span className="ml-[23px] font-['Liberation_Serif',serif] italic text-[#444] text-[14px] leading-none">f<span className="text-[10px]">x</span></span>
            </div>
            <div className="ml-[3px] flex-1 h-[26px] bg-white border border-[#d4d4d4]" />
          </div>
          {/* Sheet */}
          <div className="h-[444px] shrink-0 overflow-hidden bg-[#c4c4c4]">
            <div className="w-[1371px] grid grid-cols-[22px_64px_182px_150px_110px_65px_65px_65px_65px_64px_65px_65px_65px_65px_65px_65px_64px_65px] grid-rows-[20px] auto-rows-[20.33px] tracking-normal text-[12.5px] text-[#1a1a1a]">
              <div className="bg-[#e6e6e6] flex items-end justify-center pb-[3px] border-b-2 border-[#1f7145]">
                <svg width="12" height="12" viewBox="0 0 12 12" className="block"><path d="M12 0v12H0z" fill="#1f6b3f" /></svg>
              </div>
              {columns.map((c) => (
                <div key={c} className="bg-[#d4f0e1] text-[#2a7a52] flex items-center justify-center pt-[2px] leading-none border-r border-[#b9cfc3] border-b-2 border-b-[#1f7145]">{c}</div>
              ))}
              {Array.from({ length: 21 }).map((_, r) => (
                <React.Fragment key={r}>
                  <div className="bg-[#d4f0e1] text-[#2a7a52] flex items-center justify-center pt-[4px] leading-none border-r-2 border-r-[#1f7145] border-b border-b-[#b9cfc3]">{r + 1}</div>
                  {columns.map((c, i) => {
                    const text = data[r] && data[r][i];
                    const white = r === 15 && i === 2;
                    const wide = r > 0 && (i === 1 || i === 2);
                    return (
                      <div key={c} className={`flex items-center justify-center pt-[4px] leading-none whitespace-nowrap border-r border-b border-[#a9a9a9] ${white ? "bg-white" : "bg-[#c4c4c4]"} ${r === 0 ? "font-bold" : ""} ${wide ? "text-[13px] tracking-[0.3px]" : ""}`}>{text}</div>
                    );
                  })}
                </React.Fragment>
              ))}
            </div>
          </div>
        </div>
        {/* Vertical scrollbar */}
        <div className="w-[17px] shrink-0 bg-[#e0e0e0] flex flex-col items-center">
          <div className="w-[15px] h-[16px] bg-white border border-[#ababab] flex items-center justify-center">
            <S w={7} h={4}><path d="M0 4l3.500-4L7 4z" fill="#555" /></S>
          </div>
          <div className="h-[72px]" />
          <div className="w-[15px] h-[98px] bg-white border border-[#ababab]" />
          <div className="flex-1" />
          <div className="w-[15px] h-[16px] bg-white border border-[#ababab] flex items-center justify-center">
            <S w={7} h={4}><path d="M0 0h7L3.500 4z" fill="#555" /></S>
          </div>
        </div>
      </div>

      {/* Horizontal scrollbar */}
      <div className="h-[18px] shrink-0 bg-[#dcdcdc] flex items-center">
        <div className="ml-[2px] w-[15px] h-[15px] bg-white border border-[#ababab] flex items-center justify-center">
          <S w={4} h={7}><path d="M4 0v7L0 3.500z" fill="#555" /></S>
        </div>
        <div className="w-[187px]" />
        <div className="w-[923px] h-[15px] bg-white border border-[#ababab]" />
        <div className="w-[207px]" />
        <div className="w-[15px] h-[15px] bg-white border border-[#ababab] flex items-center justify-center">
          <S w={4} h={7}><path d="M0 0v7l4-3.500z" fill="#555" /></S>
        </div>
      </div>

      {/* Status bar */}
      <div className="h-[21px] shrink-0 bg-[#f1f1f1] flex items-center pb-[3px] text-[11px] tracking-normal text-[#444] border-t border-[#c8c8c8]">
        <span className="ml-[7px] w-[77px] whitespace-nowrap">Page 1 of 1</span>
        <span className="w-[60px] whitespace-nowrap">0 words</span>
        <Proof />
        <span className="ml-[17px] whitespace-nowrap">English (India)</span>
        <div className="flex-1" />
        <ReadIco />
        <div className="ml-[12px] w-[38px] self-stretch -mb-[3px] bg-[#c6c6c6] flex items-center justify-center pb-[3px]"><PrintIco /></div>
        <div className="ml-[12px]"><WebIco /></div>
        <div className="ml-[16px] w-[6px] h-[2px] bg-[#555]" />
        <div className="ml-[4px] w-[100px] h-px bg-[#aaa] flex items-center relative">
          <div className="ml-[63px] w-[5px] h-[11px] bg-[#666] shrink-0" />
        </div>
        <div className="ml-[4px]"><S w={7} h={7}><path d="M0 3.500h7M3.500 0v7" stroke="#555" strokeWidth="1.600" /></S></div>
        <span className="ml-[11px] mr-[8px] whitespace-nowrap">230%</span>
      </div>

      {/* Taskbar */}
      <div className="h-[40px] shrink-0 bg-linear-to-r from-[#cfe6ee] to-[#d6dfee] flex items-center tracking-normal text-[#111]">
        <div className="ml-[16px]"><WinLogo /></div>
        <div className="ml-[29px]"><Search /></div>
        <div className="ml-[29px]"><TaskView /></div>
        <div className="ml-[31px]"><Edge /></div>
        <div className="ml-[26px]"><Folder /></div>
        <div className="ml-[26px]"><Mail /></div>
        <div className="ml-[25px]"><Clip /></div>
        <div className="ml-[25px] w-[24px] h-[40px] flex items-center justify-center relative">
          <Chrome />
          <div className="absolute bottom-0 -left-[8px] w-[39px] h-[2px] bg-[#0078d4]" />
        </div>
        <div className="ml-[25px] w-[24px] h-[40px] flex items-center justify-center relative">
          <AppTile c="#1e7145" l="X" line="#1e7145" />
          <div className="absolute bottom-0 -left-[8px] w-[40px] h-[2px] bg-[#0078d4]" />
        </div>
        <div className="ml-[13px] w-[48px] h-[40px] bg-[#ebf3f8] flex items-center justify-center relative">
          <AppTile c="#2b579a" l="W" line="#2b579a" />
          <div className="absolute bottom-0 left-0 w-[48px] h-[2px] bg-[#0078d4]" />
        </div>
        <div className="flex-1" />
        <div className="relative mr-[8px]">
          <Cloud />
          <div className="absolute -top-[6px] -right-[1px] w-[12px] h-[12px] rounded-full bg-[#d8232a] text-white text-[8px] leading-[12px] text-center">1</div>
        </div>
        <span className="text-[13px] mt-[2px] whitespace-nowrap">27°C</span>
        <span className="ml-[9px] text-[13px] mt-[2px] whitespace-nowrap">Cloudy</span>
        <div className="ml-[25px]"><Chevron /></div>
        <div className="ml-[10px]"><Meet /></div>
        <div className="ml-[8px]"><Battery /></div>
        <div className="ml-[11px]"><Wifi /></div>
        <div className="ml-[9px]"><Speaker /></div>
        <span className="ml-[10px] text-[11.5px]">ENG</span>
        <div className="ml-[13px] w-[58px] mb-[2px] flex flex-col items-center text-[11.5px] leading-[19px] whitespace-nowrap"><span>21:37</span><span>15/03/2024</span></div>
        <div className="ml-[17px] mr-[25px] relative">
          <Notify />
          <div className="absolute -bottom-[7px] -right-[7px] w-[16px] h-[16px] rounded-full bg-[#d8dfee] border border-[#666] text-[10px] leading-[14px] text-center font-bold text-[#444]">1</div>
        </div>
      </div>

      {/* Floating mini toolbar */}
      <div className="absolute z-20 left-[615px] top-[268px] w-[265px] h-[56px] bg-white border border-[#cfcfcf] shadow-[1px_1px_3px_rgba(0,0,0,0.25)] pl-[3px] pt-[3px] text-[#555]">
        <div className="flex items-center h-[24px]">
          <div className="w-[65px] h-[24px] border border-[#c8c8c8] flex items-center justify-between pl-[3px] pr-[4px] pb-[2px] text-[11.5px]"><span>Calibri</span><Caret /></div>
          <div className="w-[46px] h-[24px] border border-[#c8c8c8] flex items-center justify-between pl-[3px] pr-[4px] pb-[2px] text-[11.5px]"><span>11</span><Caret /></div>
          <div className="ml-[6px] flex items-start w-[16px]"><span className="text-[13px] leading-[14px]">A</span><S w={5} h={4}><path d="M0 4l2.500-4L5 4z" fill={B} /></S></div>
          <div className="ml-[6px] flex items-start w-[15px]"><span className="text-[11px] leading-[14px] mt-[1px]">A</span><S w={5} h={4}><path d="M0 0h5L2.500 4z" fill={B} /></S></div>
          <div className="ml-[5px]"><Coins /></div>
          <div className="ml-[5px]"><Caret /></div>
          <span className="ml-[9px] text-[14px] leading-none">%</span>
          <span className="ml-[12px] font-bold text-[13px] leading-none">,</span>
          <div className="ml-[12px]"><Wrap /></div>
        </div>
        <div className="flex items-center h-[24px] pl-[6px]">
          <span className="font-bold text-[12px] w-[22px] text-[#444]">B</span>
          <span className="font-['Liberation_Serif',serif] italic font-bold text-[13px] w-[20px] text-[#444]">I</span>
          <AlignC />
          <div className="ml-[6px]"><Fill /></div>
          <div className="ml-[5px]"><Caret /></div>
          <div className="ml-[6px]"><ACol /></div>
          <div className="ml-[5px]"><Caret /></div>
          <div className="ml-[7px]"><Borders /></div>
          <div className="ml-[6px]"><Caret /></div>
          <div className="ml-[6px]"><Dec /></div>
          <div className="ml-[6px]"><Dec inc /></div>
          <div className="ml-[8px]"><Brush /></div>
        </div>
      </div>

      {/* Context menu */}
      <div className="absolute z-20 left-[615px] top-[340px] w-[138px] h-[304px] bg-white border border-[#cfcfcf] shadow-[1px_1px_3px_rgba(0,0,0,0.25)]">
        <MenuItem h="h-[23px]" icon={<Scissors />}>Cu<u>t</u></MenuItem>
        <MenuItem h="h-[27px]" icon={<CopyIco />}><u>C</u>opy</MenuItem>
        <div className="h-[22px] flex items-center">
          <div className="w-[26px] pl-[6px] shrink-0"><PasteIco /></div>
          <div className="flex-1 h-[22px] bg-[#e9e9e9] flex items-center pl-[9px] font-bold text-[#5a5a5a] whitespace-nowrap">Paste Options:</div>
        </div>
        <div className="h-[31px] pl-[31px] flex items-center"><PasteIco big /></div>
        <MenuItem h="h-[22px]">Paste <u>S</u>pecial...</MenuItem>
        <div className="h-[3px] ml-[33px] border-b border-[#e2e2e2]" />
        <MenuItem><u>I</u>nsert</MenuItem>
        <MenuItem h="h-[24.5px]"><u>D</u>elete</MenuItem>
        <MenuItem>Clear Co<u>n</u>tents</MenuItem>
        <div className="h-[2px] ml-[33px] border-b border-[#e2e2e2]" />
        <MenuItem h="h-[25px]" icon={<FormatCellsIco />}><u>F</u>ormat Cells...</MenuItem>
        <MenuItem h="h-[24.5px]" ><u>R</u>ow Height...</MenuItem>
        <MenuItem h="h-[24.5px]"><u>H</u>ide</MenuItem>
        <MenuItem><u>U</u>nhide</MenuItem>
      </div>

      {/* Red arrow annotation */}
      <svg width="241" height="38" viewBox="0 0 241 38" className="absolute z-30 left-[732px] top-[540px]">
        <path d="M2 19L19 2v9.500h220v16H19V36z" fill="#ff0000" stroke="#2f528f" strokeWidth="3" />
      </svg>
    </div>
  );
}
